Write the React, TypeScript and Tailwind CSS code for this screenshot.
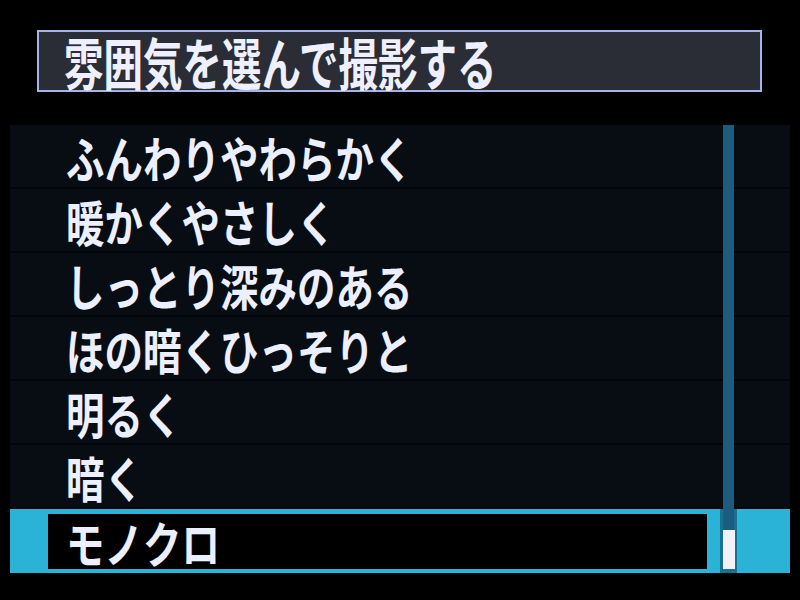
import React from 'react';

const items = [
  'ふんわりやわらかく',
  '暖かくやさしく',
  'しっとり深みのある',
  'ほの暗くひっそりと',
  '明るく',
  '暗く',
];

const font = { fontFamily: '"Noto Sans CJK JP", "Noto Sans", sans-serif' };

function Label({ text }: { text: string }) {
  return (
    <span className="inline-block origin-center scale-y-[1.27] text-[38.5px] font-bold leading-none text-[#eceffd]">
      {text}
    </span>
  );
}

function Row({ text }: { text: string }) {
  return (
    <div className="flex h-[64px]">
      <div className="flex w-[713px] items-center border-b-2 border-[#02050a] pl-[56px]">
        <Label text={text} />
      </div>
      <div className="w-[11px] bg-[#1c5c7e]" />
      <div className="flex-1 border-b-2 border-[#02050a]" />
    </div>
  );
}

function SelectedRow({ text }: { text: string }) {
  return (
    <div className="flex h-[64px] bg-[#2ab3d6] py-[5px] pb-[4px]">
      <div className="ml-[38px] flex w-[659px] items-center bg-black pl-[18px]">
        <Label text={text} />
      </div>
      <div className="w-[13px]" />
      {/* scroll thumb sits at the bottom of the track */}
      <div className="-my-[5px] -mb-[4px] flex w-[17px] flex-col items-center bg-[#19708f] pb-[4px]">
        <div className="h-[21px] w-[11px] bg-[#1c5c7e]" />
        <div className="mt-auto h-[39px] w-[12px] bg-[#f2f0f8]" />
      </div>
    </div>
  );
}

export default function App() {
  return (
    <div className="h-[600px] w-[800px] overflow-hidden bg-black pt-[30px]" style={font}>
      <div className="ml-[37px] flex h-[62px] w-[725px] items-center border-2 border-[#a6b3e8] bg-[#2a2d35] pl-[25px]">
        <span className="inline-block origin-center scale-y-[1.4] text-[39.5px] font-bold leading-none text-[#eef0ff]">
          雰囲気を選んで撮影する
        </span>
      </div>

      <div className="ml-[10px] mt-[33px] w-[780px] bg-[#080d14]">
        {items.map((t) => (
          <Row key={t} text={t} />
        ))}
        <SelectedRow text="モノクロ" />
      </div>
    </div>
  );
}
